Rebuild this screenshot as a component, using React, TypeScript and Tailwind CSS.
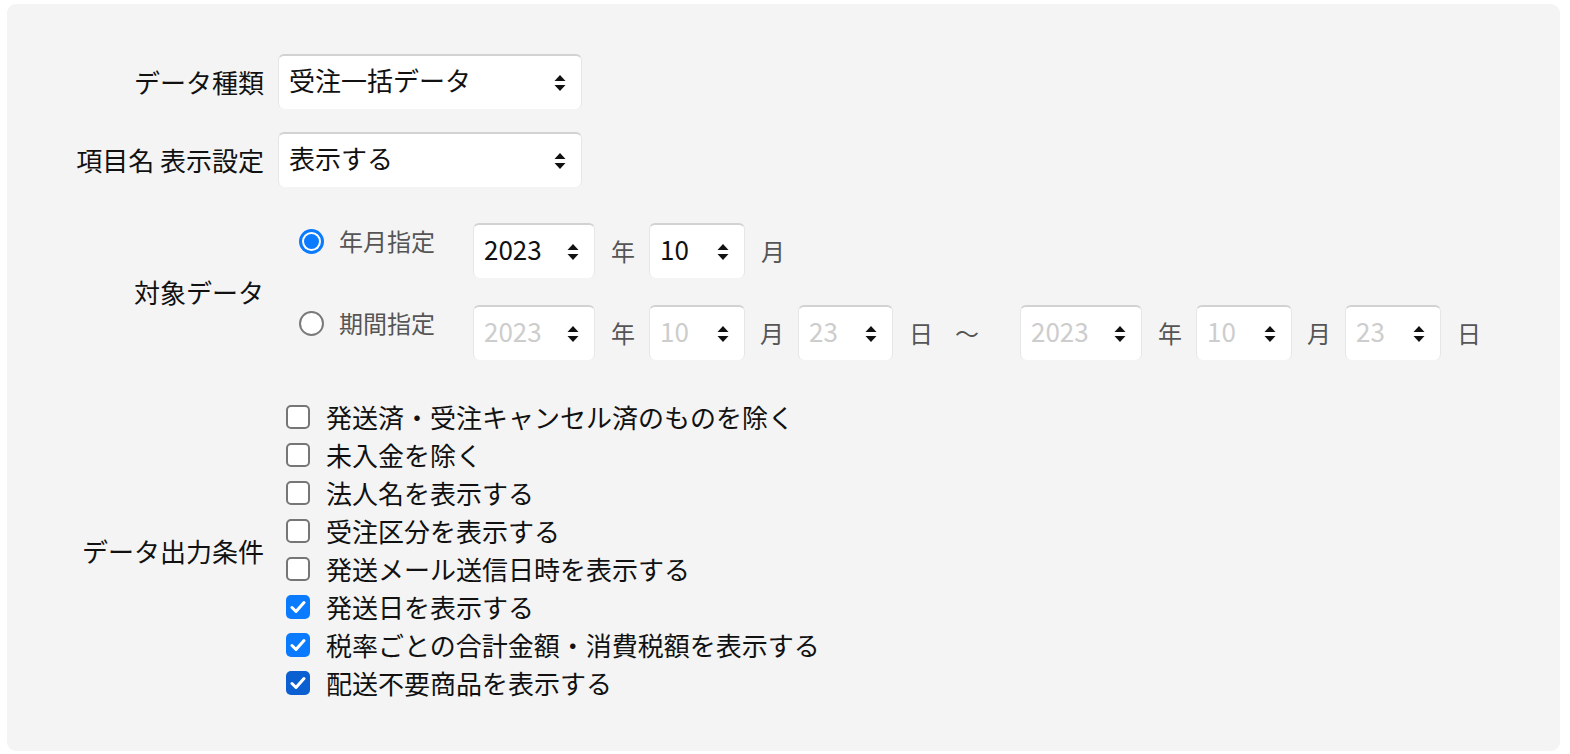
import type { ReactNode } from 'react'

const FONT = { fontFamily: '"Noto Sans CJK JP", "Noto Sans", sans-serif' }

function Arrows() {
  return (
    <svg width="12" height="18" viewBox="0 0 12 18" className="shrink-0">
      <path d="M6 1 L11.5 7 L0.5 7 Z" fill="#111" />
      <path d="M6 17 L11.5 11 L0.5 11 Z" fill="#111" />
    </svg>
  )
}

function Select({ value, width, disabled = false }: { value: string; width: string; disabled?: boolean }) {
  return (
    <div
      className={`${width} flex h-[55px] shrink-0 items-center justify-between rounded-[6px] border-x border-t-2 border-x-[#e6e6e6] border-t-[#d2d2d2] bg-white pl-[10px] pr-[15px] text-[26px] ${
        disabled ? 'text-[#cdcdcd]' : 'text-[#111]'
      }`}
    >
      <span className="-mt-[5px] leading-none">{value}</span>
      <Arrows />
    </div>
  )
}

function Unit({ children, className = '' }: { children: ReactNode; className?: string }) {
  return <span className={`text-[24px] text-[#555] ${className}`}>{children}</span>
}

function Radio({ checked }: { checked: boolean }) {
  return checked ? (
    <span className="flex h-[25px] w-[25px] items-center justify-center rounded-full bg-[#0a7aff]">
      <span className="flex h-[19px] w-[19px] items-center justify-center rounded-full bg-white">
        <span className="h-[15px] w-[15px] rounded-full bg-[#0a7aff]" />
      </span>
    </span>
  ) : (
    <span className="h-[25px] w-[25px] rounded-full border-2 border-[#7a7a7a] bg-white" />
  )
}

function Checkbox({ checked, dark = false }: { checked: boolean; dark?: boolean }) {
  if (!checked) {
    return <span className="h-[24px] w-[24px] shrink-0 rounded-[5px] border-2 border-[#767676] bg-white" />
  }
  return (
    <span
      className={`flex h-[24px] w-[24px] shrink-0 items-center justify-center rounded-[5px] ${
        dark ? 'bg-[#0b5fd0]' : 'bg-[#0a7aff]'
      }`}
    >
      <svg width="16" height="14" viewBox="0 0 16 14">
        <path d="M2 7.5 L6 11.5 L14 2.5" fill="none" stroke="white" strokeWidth="3" strokeLinecap="round" strokeLinejoin="round" />
      </svg>
    </span>
  )
}

function Row({ label, children, className = '' }: { label: string; children: ReactNode; className?: string }) {
  return (
    <div className={`flex items-center ${className}`}>
      <div className="w-[257px] shrink-0 text-right text-[26px] text-[#111]">{label}</div>
      <div className="ml-[14px]">{children}</div>
    </div>
  )
}

const conditions = [
  { text: '発送済・受注キャンセル済のものを除く', checked: false },
  { text: '未入金を除く', checked: false },
  { text: '法人名を表示する', checked: false },
  { text: '受注区分を表示する', checked: false },
  { text: '発送メール送信日時を表示する', checked: false },
  { text: '発送日を表示する', checked: true },
  { text: '税率ごとの合計金額・消費税額を表示する', checked: true },
  { text: '配送不要商品を表示する', checked: true, dark: true },
]

export default function App() {
  return (
    <div className="min-h-screen bg-white pl-[7px] pt-[4px]" style={FONT}>
      <div className="h-[747px] w-[1553px] rounded-[9px] bg-[#f4f4f4] pt-[50px]">
        <Row label="データ種類">
          <Select value="受注一括データ" width="w-[304px]" />
        </Row>
        <Row label="項目名 表示設定" className="mt-[23px]">
          <Select value="表示する" width="w-[304px]" />
        </Row>

        <Row label="対象データ" className="mt-[36px]">
          <div className="flex flex-col gap-[27px]">
            <div className="flex items-start">
              <div className="flex w-[195px] shrink-0 items-center gap-[15px] pl-[21px]">
                <Radio checked />
                <span className="text-[24px] text-[#555]">年月指定</span>
              </div>
              <div className="flex items-center">
                <Select value="2023" width="w-[122px]" />
                <Unit className="ml-[16px] mr-[14px]">年</Unit>
                <Select value="10" width="w-[96px]" />
                <Unit className="ml-[16px]">月</Unit>
              </div>
            </div>
            <div className="flex items-start">
              <div className="flex w-[195px] shrink-0 items-center gap-[15px] pl-[21px]">
                <Radio checked={false} />
                <span className="text-[24px] text-[#555]">期間指定</span>
              </div>
              <div className="flex items-center">
                <Select value="2023" width="w-[122px]" disabled />
                <Unit className="ml-[16px] mr-[14px]">年</Unit>
                <Select value="10" width="w-[96px]" disabled />
                <Unit className="ml-[15px] mr-[14px]">月</Unit>
                <Select value="23" width="w-[95px]" disabled />
                <Unit className="ml-[16px]">日</Unit>
                <Unit className="ml-[22px] mr-[41px]">～</Unit>
                <Select value="2023" width="w-[122px]" disabled />
                <Unit className="ml-[16px] mr-[14px]">年</Unit>
                <Select value="10" width="w-[96px]" disabled />
                <Unit className="ml-[15px] mr-[14px]">月</Unit>
                <Select value="23" width="w-[96px]" disabled />
                <Unit className="ml-[16px]">日</Unit>
              </div>
            </div>
          </div>
        </Row>

        <Row label="データ出力条件" className="mt-[38px]">
          <div className="flex flex-col">
            {conditions.map((c) => (
              <div key={c.text} className="flex h-[38px] items-center gap-[16px] pl-[8px]">
                <Checkbox checked={c.checked} dark={c.dark} />
                <span className="text-[26px] leading-none text-[#111]">{c.text}</span>
              </div>
            ))}
          </div>
        </Row>
      </div>
    </div>
  )
}
